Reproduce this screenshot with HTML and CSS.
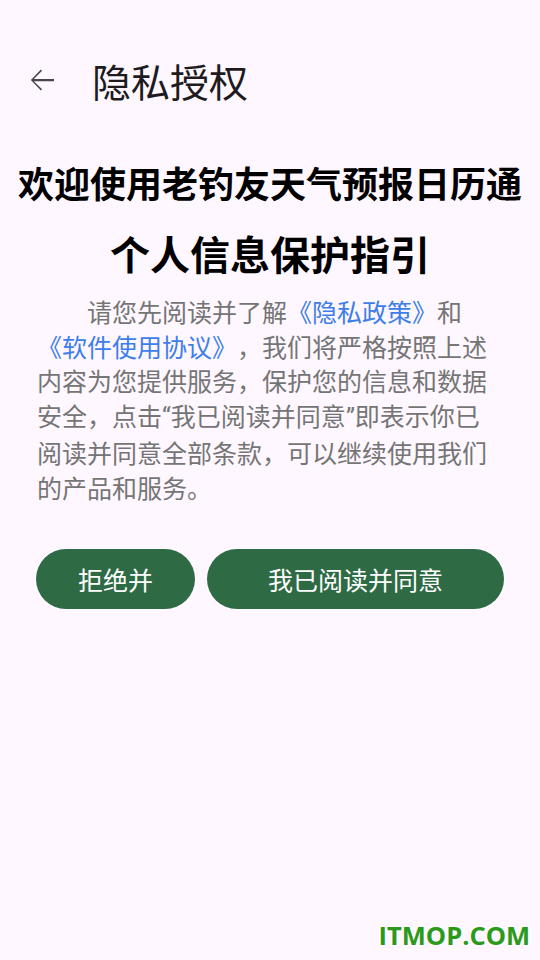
FILE: index.html
```html
<!DOCTYPE html>
<html lang="zh-CN">
<head>
<meta charset="utf-8">
<link rel="stylesheet" href="styles.css">
</head>
<body>
<div class="page">
  <header class="topbar">
    <svg class="back" width="36" height="36" viewBox="0 0 24 24"><path d="M20 11.25H6.6l5.45-5.45-.75-.75L4.55 12l6.75 6.95.75-.75-5.45-5.45H20v-1.5z" fill="#49454F"/></svg>
    <h1 class="title">隐私授权</h1>
  </header>
  <h2 class="h-main">欢迎使用老钓友天气预报日历通</h2>
  <h2 class="h-sub">个人信息保护指引</h2>
  <p class="body">请您先阅读并了解<span class="link">《隐私政策》</span>和<span class="link">《软件使用协议》</span>，我们将严格按照上述内容为您提供服务，保护您的信息和数据安全，点击<span class="q">“</span>我已阅读并同意<span class="q">”</span>即表示你已阅读并同意全部条款，可以继续使用我们的产品和服务。</p>
  <div class="actions">
    <button class="btn btn-reject">拒绝并</button>
    <button class="btn btn-agree">我已阅读并同意</button>
  </div>
  <div class="watermark">ITMOP.COM</div>
</div>
</body>
</html>
```
FILE: styles.css
```css
html, body {
  margin: 0;
  padding: 0;
  background: #FEF7FF;
}
body {
  font-family: "Noto Sans CJK SC", "Noto Sans", sans-serif;
  width: 540px;
  height: 960px;
  overflow: hidden;
  text-spacing-trim: space-all;
}
.page {
  position: relative;
  height: 960px;
  display: flex;
  flex-direction: column;
}
.topbar {
  height: 64px;
  margin-top: 48px;
  display: flex;
  align-items: center;
  padding-left: 24px;
}
.back {
  display: block;
}
.title {
  margin: 0 0 0 32px;
  font-size: 39px;
  font-weight: 400;
  color: #1D1B20;
  line-height: 64px;
}
.h-main {
  margin: 50px 0 0;
  text-align: center;
  font-size: 36px;
  font-weight: 700;
  color: #000;
  line-height: 40px;
}
.h-sub {
  margin: 29px 0 0;
  text-align: center;
  font-size: 40px;
  font-weight: 700;
  color: #000;
  line-height: 44px;
}
.body {
  margin: 19px 0 0;
  padding: 0 48px 0 37px;
  font-size: 25px;
  line-height: 34.6px;
  color: #757575;
  text-indent: 2em;
}
.q {
  font-family: "Roboto", sans-serif;
}
.link {
  color: #3D7EEB;
}
.actions {
  display: flex;
  gap: 12px;
  padding: 0 36px;
  margin-top: 44px;
}
.btn {
  height: 60px;
  border: none;
  border-radius: 30px;
  background: #2E6B45;
  color: #FFFFFF;
  font-family: "Noto Sans CJK SC", "Noto Sans", sans-serif;
  font-size: 25px;
  padding: 0;
}
.btn-reject {
  width: 159px;
}
.btn-agree {
  width: 297px;
}
.watermark {
  position: absolute;
  right: 10px;
  bottom: 8px;
  font-family: "Open Sans", "Noto Sans", sans-serif;
  font-weight: 700;
  font-size: 25.5px;
  color: #2A9A1A;
}
```
